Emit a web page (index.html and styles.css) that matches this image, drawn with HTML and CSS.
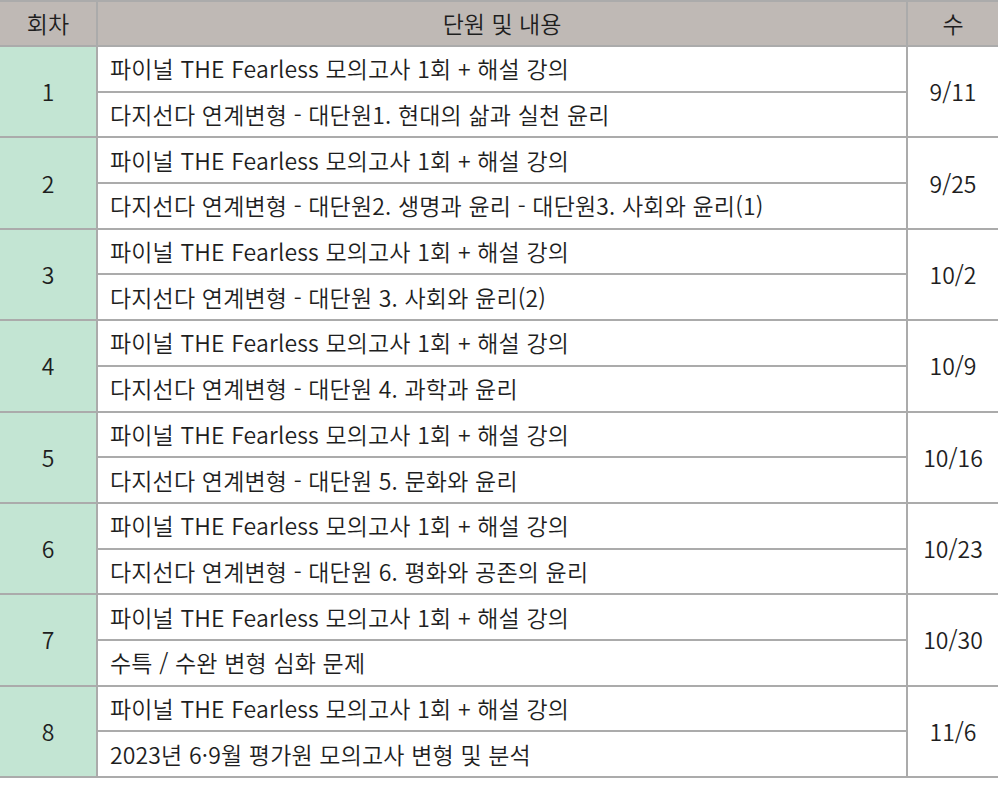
FILE: index.html
```html
<!DOCTYPE html>
<html lang="ko">
<head>
<meta charset="utf-8">
<link rel="stylesheet" href="styles.css">
</head>
<body>
<table class="sched">
  <thead>
    <tr class="head"><th class="c1">회차</th><th class="c2">단원 및 내용</th><th class="c3">수</th></tr>
  </thead>
  <tbody>
    <tr><td class="num" rowspan="2">1</td><td class="txt">파이널 THE Fearless 모의고사 1회 + 해설 강의</td><td class="date" rowspan="2">9/11</td></tr>
    <tr><td class="txt">다지선다 연계변형 - 대단원1. 현대의 삶과 실천 윤리</td></tr>
    <tr><td class="num" rowspan="2">2</td><td class="txt">파이널 THE Fearless 모의고사 1회 + 해설 강의</td><td class="date" rowspan="2">9/25</td></tr>
    <tr><td class="txt">다지선다 연계변형 - 대단원2. 생명과 윤리 - 대단원3. 사회와 윤리(1)</td></tr>
    <tr><td class="num" rowspan="2">3</td><td class="txt">파이널 THE Fearless 모의고사 1회 + 해설 강의</td><td class="date" rowspan="2">10/2</td></tr>
    <tr><td class="txt">다지선다 연계변형 - 대단원 3. 사회와 윤리(2)</td></tr>
    <tr><td class="num" rowspan="2">4</td><td class="txt">파이널 THE Fearless 모의고사 1회 + 해설 강의</td><td class="date" rowspan="2">10/9</td></tr>
    <tr><td class="txt">다지선다 연계변형 - 대단원 4. 과학과 윤리</td></tr>
    <tr><td class="num" rowspan="2">5</td><td class="txt">파이널 THE Fearless 모의고사 1회 + 해설 강의</td><td class="date" rowspan="2">10/16</td></tr>
    <tr><td class="txt">다지선다 연계변형 - 대단원 5. 문화와 윤리</td></tr>
    <tr><td class="num" rowspan="2">6</td><td class="txt">파이널 THE Fearless 모의고사 1회 + 해설 강의</td><td class="date" rowspan="2">10/23</td></tr>
    <tr><td class="txt">다지선다 연계변형 - 대단원 6. 평화와 공존의 윤리</td></tr>
    <tr><td class="num" rowspan="2">7</td><td class="txt">파이널 THE Fearless 모의고사 1회 + 해설 강의</td><td class="date" rowspan="2">10/30</td></tr>
    <tr><td class="txt">수특 / 수완 변형 심화 문제</td></tr>
    <tr><td class="num" rowspan="2">8</td><td class="txt">파이널 THE Fearless 모의고사 1회 + 해설 강의</td><td class="date" rowspan="2">11/6</td></tr>
    <tr><td class="txt">2023년 6·9월 평가원 모의고사 변형 및 분석</td></tr>
  </tbody>
</table>
</body>
</html>
```

FILE: styles.css
```css
html, body {
  margin: 0;
  padding: 0;
  background: #ffffff;
}
body {
  font-family: "Noto Sans CJK KR", "Noto Sans", sans-serif;
  color: #1e1e1e;
  font-size: 23px;
  font-weight: 350;
}
.sched {
  border-collapse: collapse;
  width: 998px;
  table-layout: fixed;
  border-top: 2px solid #a4a4a4;
}
.sched th, .sched td {
  border: 2px solid #ababab;
  padding: 0;
  line-height: 1;
  font-weight: 350;
}
.sched tr {
  height: 45.7px;
}
.sched tr.head {
  height: 45px;
}
.sched th {
  background: #bfb9b5;
  text-align: center;
}
.c1 { width: 96px; }
.c3 { width: 90px; }
.sched th.c1, .sched td.num { border-left: none; }
.sched th.c3, .sched td.date { border-right: none; }
.num {
  background: #c3e5d3;
  text-align: center;
}
.txt {
  padding-left: 12px !important;
  text-align: left;
  letter-spacing: 0.15px;
}
.date {
  text-align: center;
}
```
